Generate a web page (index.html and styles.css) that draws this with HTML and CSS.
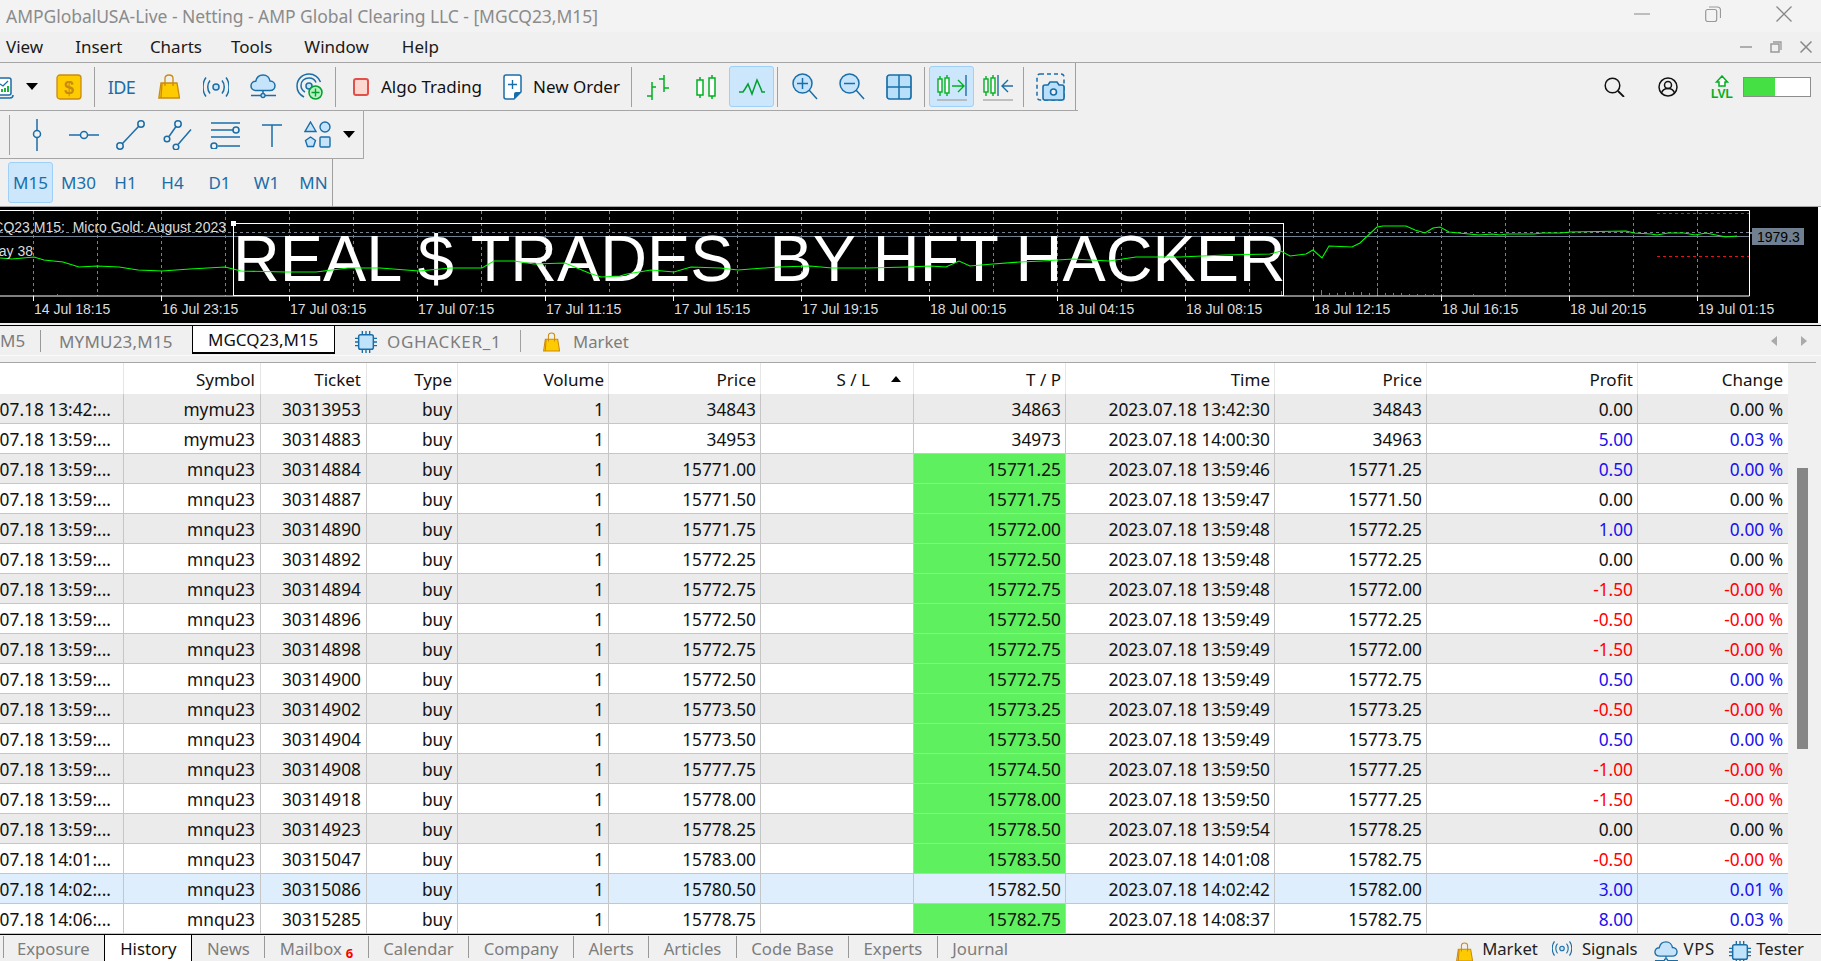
FILE: index.html
```html
<!DOCTYPE html>
<html lang="en">
<head>
<meta charset="utf-8">
<title>MetaTrader</title>
<link rel="stylesheet" href="styles.css">
</head>
<body>
<svg class="defs" width="0" height="0">
  <symbol id="bag" viewBox="0 0 22 25"><path d="M3 9h16l2.500 15H.8z" fill="#fecb00" stroke="#c98a10" stroke-width="1.300"/><path d="M7 12V4.500C7 2 8.500 1 11 1s4 1 4 3.500V12M4 9 3 24" fill="none" stroke="#c98a10" stroke-width="1.300"/></symbol>
  <symbol id="signal" viewBox="0 0 26 20"><circle cx="13" cy="10" r="3" fill="#c5e4fb" stroke="#1a6ea8" stroke-width="1.500"/><path d="M7 3.500c-3 3.500-3 9.500 0 13M19 3.500c3 3.500 3 9.500 0 13M3 .5c-4 5-4 14 0 19M23 .5c4 5 4 14 0 19" fill="none" stroke="#1a6ea8" stroke-width="1.500"/></symbol>
  <symbol id="cloud" viewBox="0 0 26 25"><path d="M6.500 16.500C2.500 16.500 1 14 1 12c0-3 2.300-4.700 4.700-4.700C6.500 3.500 9.500 1 13 1c4 0 6.500 3 7 6 3 0 5 2.200 5 4.800 0 2.600-2 4.700-5 4.700z" fill="#c5e4fb" stroke="#1a6ea8" stroke-width="1.500"/><path d="M1 21.500h25M13 16.500v5" stroke="#1a6ea8" stroke-width="1.500"/><circle cx="13" cy="21.500" r="2" fill="#c5e4fb" stroke="#1a6ea8" stroke-width="1.300"/></symbol>
  <symbol id="chip" viewBox="0 0 24 24"><rect x="4" y="4" width="16" height="16" rx="2" fill="#bfe3fb" stroke="#1a6ea8" stroke-width="1.600"/><path d="M8 0v4M12 0v4M16 0v4M8 20v4M12 20v4M16 20v4M0 8h4M0 12h4M0 16h4M20 8h4M20 12h4M20 16h4" stroke="#1a6ea8" stroke-width="1.500"/></symbol>
</svg>

<header class="titlebar">
  <span class="title-text">AMPGlobalUSA-Live - Netting - AMP Global Clearing LLC - [MGCQ23,M15]</span>
  <div class="win-controls">
    <svg width="16" height="16" viewBox="0 0 16 16"><path d="M0 8h16" stroke="#999" stroke-width="1.200"/></svg>
    <svg width="16" height="16" viewBox="0 0 16 16"><rect x=".7" y="3.500" width="11" height="12" rx="2" fill="none" stroke="#999" stroke-width="1.200"/><path d="M4 1h8.500a3 3 0 0 1 3 3v8" fill="none" stroke="#999" stroke-width="1.200"/></svg>
    <svg width="16" height="16" viewBox="0 0 16 16"><path d="M.5.500l15 15M15.500.500l-15 15" stroke="#888" stroke-width="1.300"/></svg>
  </div>
</header>

<nav class="menubar">
  <span class="menu-item m-view">View</span>
  <span class="menu-item m-insert">Insert</span>
  <span class="menu-item m-charts">Charts</span>
  <span class="menu-item m-tools">Tools</span>
  <span class="menu-item m-window">Window</span>
  <span class="menu-item m-help">Help</span>
  <div class="doc-controls">
    <svg width="12" height="12" viewBox="0 0 12 12"><path d="M0 6h12" stroke="#999" stroke-width="1.500"/></svg>
    <svg width="12" height="12" viewBox="0 0 12 12"><rect x="1" y="3" width="8" height="8" fill="none" stroke="#999" stroke-width="1.500"/><path d="M3 1h8v8" fill="none" stroke="#999" stroke-width="1.300"/></svg>
    <svg width="12" height="12" viewBox="0 0 12 12"><path d="M.5.500l11 11M11.500.500l-11 11" stroke="#888" stroke-width="1.500"/></svg>
  </div>
</nav>

<section class="toolrow">
  <div class="toolbar tb-main">
    <span class="btn btn-clip"><svg width="15" height="26" viewBox="11 0 15 26"><rect x="5" y="4" width="17" height="17" rx="2" fill="#fff" stroke="#1a6ea8" stroke-width="1.500"/><path d="M5 24h16a3 3 0 0 0 3-3" fill="none" stroke="#1a6ea8" stroke-width="1.500"/><path d="M11 10l3 2 5-5" fill="none" stroke="#1a6ea8" stroke-width="1.300"/><path d="M13 18v-3M16 18v-4M19 18v-6" stroke="#00b020" stroke-width="1.800"/></svg></span>
    <span class="btn btn-caret"><span class="caret"></span></span>
    <span class="btn btn-dollar"><svg width="26" height="26" viewBox="0 0 26 26"><rect x="1" y="1" width="24" height="24" rx="3" fill="#fecb00" stroke="#c98a10" stroke-width="1.300"/><text x="13" y="19.500" text-anchor="middle" class="dollar-glyph">$</text></svg></span>
    <span class="sep sep-a"></span>
    <span class="btn ide">IDE</span>
    <span class="btn"><svg width="22" height="25"><use href="#bag"/></svg></span>
    <span class="btn"><svg width="26" height="20"><use href="#signal"/></svg></span>
    <span class="btn"><svg width="26" height="25"><use href="#cloud"/></svg></span>
    <span class="btn"><svg width="27" height="27" viewBox="0 0 27 27"><path d="M8 24C3 21.500 1 17 1 13 1 6 6.500 1 13 1c5.500 0 10 3.500 11.500 8" fill="none" stroke="#1a6ea8" stroke-width="1.500"/><path d="M9 19c-2.500-1.500-4-3.500-4-6.500C5 8 8.500 5 13 5c3.500 0 6 2 7 4.500" fill="none" stroke="#1a6ea8" stroke-width="1.500"/><circle cx="13" cy="13" r="3" fill="#c5e4fb" stroke="#1a6ea8" stroke-width="1.500"/><circle cx="19.500" cy="19.500" r="6.500" fill="#b8f0c0" stroke="#00a030" stroke-width="1.500"/><path d="M19.500 15.500v8M15.500 19.500h8" stroke="#00a030" stroke-width="1.400"/></svg></span>
    <span class="sep sep-b"></span>
    <span class="textbtn algo"><span class="algo-box"></span>Algo Trading</span>
    <span class="textbtn order"><svg width="19" height="26" viewBox="0 0 19 26"><path d="M3 1h13a2 2 0 0 1 2 2v15l-7 7H3a2 2 0 0 1-2-2V3a2 2 0 0 1 2-2z" fill="#fff" stroke="#1a6ea8" stroke-width="1.500"/><path d="M18 18h-5a2 2 0 0 0-2 2v5z" fill="#1a6ea8"/><path d="M9.500 6v9M5 10.500h9" stroke="#1a6ea8" stroke-width="1.400"/></svg>New Order</span>
    <span class="sep sep-c"></span>
    <span class="btn"><svg width="26" height="26" viewBox="0 0 26 26" fill="none" stroke="#00b020" stroke-width="1.500"><path d="M6 8v18M1 22h5M6 13h4M18 1v17M13 5h5M18 14h5"/></svg></span>
    <span class="btn"><svg width="20" height="26" viewBox="0 0 20 26" fill="#fff" stroke="#00b020" stroke-width="1.500"><path d="M4 3v21M16 1v24"/><rect x="1" y="6" width="6" height="15"/><rect x="13" y="4" width="6" height="18"/></svg></span>
    <span class="btn active narrow"><svg width="26" height="18" viewBox="0 0 26 18"><path d="M0 14h4l2-3 3-5 4 10 5-14 4 9 1 3h3" fill="none" stroke="#00a030" stroke-width="1.500"/></svg></span>
    <span class="sep sep-d"></span>
    <span class="btn"><svg width="26" height="27" viewBox="0 0 26 27"><circle cx="10.500" cy="10.500" r="9.500" fill="#c5e4fb" stroke="#1a6ea8" stroke-width="1.500"/><path d="M17 17l8 9" stroke="#1a6ea8" stroke-width="1.500"/><path d="M10.500 5v11M5 10.500h11" stroke="#1a6ea8" stroke-width="1.500"/></svg></span>
    <span class="btn"><svg width="26" height="27" viewBox="0 0 26 27"><circle cx="10.500" cy="10.500" r="9.500" fill="#c5e4fb" stroke="#1a6ea8" stroke-width="1.500"/><path d="M17 17l8 9" stroke="#1a6ea8" stroke-width="1.500"/><path d="M5 10.500h11" stroke="#1a6ea8" stroke-width="1.500"/></svg></span>
    <span class="btn"><svg width="26" height="26" viewBox="0 0 26 26"><rect x="1" y="1" width="24" height="24" rx="2.500" fill="#b9e0fa" stroke="#1a6ea8" stroke-width="1.700"/><path d="M13 1v24M1 13h24" stroke="#1a6ea8" stroke-width="1.500"/></svg></span>
    <span class="sep sep-e"></span>
    <span class="btn active narrow wide-gap"><svg width="30" height="28" viewBox="0 0 30 28" fill="none" stroke="#00b020" stroke-width="1.400"><path d="M3 3v20M10 2v21"/><rect x="1" y="6" width="4" height="13" fill="#fff"/><rect x="8" y="5" width="4" height="15" fill="#fff"/><path d="M15 13h11M21 7l6 6-6 6"/><path d="M29 2v21" stroke="#1a6ea8"/><path d="M0 27h30" stroke="#aaa"/></svg></span>
    <span class="btn"><svg width="30" height="28" viewBox="0 0 30 28" fill="none" stroke="#00b020" stroke-width="1.400"><path d="M3 3v20M10 2v21"/><rect x="1" y="6" width="4" height="13" fill="#fff"/><rect x="8" y="5" width="4" height="15" fill="#fff"/><path d="M15 2v21" stroke="#1a6ea8"/><path d="M30 13H19M25 7l-6 6 6 6" stroke="#1a6ea8"/><path d="M0 27h30" stroke="#aaa"/></svg></span>
    <span class="sep sep-f"></span>
    <span class="btn"><svg width="30" height="28" viewBox="0 0 30 28"><rect x="1" y="1" width="27" height="26" rx="3" fill="none" stroke="#1a6ea8" stroke-width="1.500" stroke-dasharray="4 3"/><path d="M9 12h3l2-3h7l2 3h3a2 2 0 0 1 2 2v11a2 2 0 0 1-2 2H9a2 2 0 0 1-2-2V14a2 2 0 0 1 2-2z" fill="#b9e0fa" stroke="#1a6ea8" stroke-width="1.600"/><circle cx="17.500" cy="19" r="3" fill="#f0f0f0" stroke="#1a6ea8" stroke-width="1.600"/></svg></span>
    <span class="sep sep-end"></span>
  </div>
  <div class="tools-right">
    <svg class="r-search" width="21" height="20" viewBox="0 0 21 20"><circle cx="8.500" cy="8.500" r="7.300" fill="none" stroke="#111" stroke-width="1.500"/><path d="M14 14l6 6" stroke="#111" stroke-width="1.800"/></svg>
    <svg class="r-user" width="20" height="20" viewBox="0 0 20 20" fill="none" stroke="#111" stroke-width="1.500"><circle cx="10" cy="10" r="9"/><circle cx="10" cy="8" r="3.500"/><path d="M3.500 16c1-3 3.500-4.500 6.500-4.500s5.500 1.500 6.500 4.500"/></svg>
    <svg class="r-lvl" width="24" height="24" viewBox="0 0 24 24"><path d="M12 1l5.500 6H15v4H9V7H6.500z" fill="#fff" stroke="#00b020" stroke-width="1.500"/><text x="12" y="23" text-anchor="middle" class="lvl-text">LVL</text></svg>
    <span class="meter"><span class="meter-fill"></span></span>
  </div>
</section>

<section class="toolrow-2">
  <span class="sep sep-t"></span>
  <span class="btn"><svg width="12" height="32" viewBox="0 0 12 32" fill="none" stroke="#1a6ea8" stroke-width="1.500"><path d="M6 0v11M6 19v13"/><circle cx="6" cy="15" r="3.500"/></svg></span>
  <span class="btn"><svg width="30" height="10" viewBox="0 0 30 10" fill="none" stroke="#1a6ea8" stroke-width="1.500"><path d="M0 5h11M19 5h11"/><circle cx="15" cy="5" r="3.500"/></svg></span>
  <span class="btn"><svg width="29" height="30" viewBox="0 0 29 30" fill="none" stroke="#1a6ea8" stroke-width="1.500"><circle cx="4" cy="26" r="3.200"/><circle cx="25" cy="4" r="3.200"/><path d="M6.500 23.500l16-17"/></svg></span>
  <span class="btn"><svg width="29" height="30" viewBox="0 0 29 30" fill="none" stroke="#1a6ea8" stroke-width="1.500"><circle cx="4" cy="19" r="2.800"/><circle cx="15" cy="4" r="3.200"/><path d="M6 16.500l7-10"/><circle cx="13" cy="27" r="2.800"/><path d="M15 24.500l13-15"/></svg></span>
  <span class="btn"><svg width="30" height="28" viewBox="0 0 30 28" fill="none" stroke="#1a6ea8" stroke-width="1.600"><path d="M1 2h29M1 9h22M1 16h29M8 25h22"/><circle cx="26" cy="9" r="3"/><circle cx="4" cy="25" r="3"/></svg></span>
  <span class="btn"><svg width="20" height="24" viewBox="0 0 20 24" fill="none" stroke="#1a6ea8" stroke-width="1.500"><path d="M0 2h20M10 2v22"/></svg></span>
  <span class="btn shapes"><svg width="28" height="27" viewBox="0 0 28 27" fill="#c5e4fb" stroke="#1a6ea8" stroke-width="1.400"><path d="M6.500 1l5.500 9.500H1z"/><circle cx="21" cy="6" r="5"/><path d="M6.500 16l5 3.500-2 6h-6l-2-6z"/><rect x="16" y="16" width="10" height="10" rx="1"/></svg></span>
  <span class="caret caret-2"></span>
</section>

<section class="timeframes">
  <span class="tf tf-on">M15</span>
  <span class="tf">M30</span>
  <span class="tf">H1</span>
  <span class="tf">H4</span>
  <span class="tf">D1</span>
  <span class="tf">W1</span>
  <span class="tf">MN</span>
  <span class="sep sep-tf"></span>
</section>

<figure class="chart">
  <svg width="1818" height="116" viewBox="0 207 1818 116">
    <rect x="0" y="207" width="1818" height="116" fill="#000"/>
    <path class="grid" d="M33.500 211V296M97.500 211V296M161.500 211V296M225.500 211V296M289.500 211V296M353.500 211V296M417.500 211V296M481.500 211V296M545.500 211V296M609.500 211V296M673.500 211V296M737.500 211V296M801.500 211V296M865.500 211V296M929.500 211V296M993.500 211V296M1057.500 211V296M1121.500 211V296M1185.500 211V296M1249.500 211V296M1313.500 211V296M1377.500 211V296M1441.500 211V296M1505.500 211V296M1569.500 211V296M1633.500 211V296M1697.500 211V296"/>
    <path class="grid" d="M0 232.500H1749"/>
    <path class="price-line" d="M0 236.500H1749"/>
    <path class="vols" d="M1281.500 295V291M1321.500 295V290M1329.500 295V293M1337.500 295V293M1345.500 295V292M1353.500 295V292M1361.500 295V292M1369.500 295V293M1377.500 295V288M1385.500 295V293M1393.500 295V293M1401.500 295V293M1409.500 295V294M1417.500 295V294M1425.500 295V294M1433.500 295V294M1441.500 295V294M1473.500 295V294M57.500 295V294"/>
    <path class="stop" d="M1657 213.500H1749M1657 256.500H1749"/>
    <text class="big" x="233" y="281">REAL $ TRADES  BY HFT HACKER</text>
    <rect class="overlay" x="233.500" y="223.500" width="1050" height="72"/>
    <rect x="231" y="221" width="5" height="5" fill="#fff"/>
    <path class="plot" d="M0 210.500H1749.500V296H0"/>
    <path class="ticks" d="M33.500 296v5M161.500 296v5M289.500 296v5M417.500 296v5M545.500 296v5M673.500 296v5M801.500 296v5M929.500 296v5M1057.500 296v5M1185.500 296v5M1313.500 296v5M1441.500 296v5M1569.500 296v5M1697.500 296v5M1749 233h4"/>
    <polyline class="pline" points="0,258 12,259 34,257 44,260 63,262 79,267 97,266 119,267 138,270 162,271 190,269 225,267 241,271 285,272 316,272 348,268 380,268 419,271 451,268 482,268 494,261 514,261 534,264 565,263 589,273 601,277 620,276 627,274 651,270 674,272 691,267 720,268 738,270 778,267 810,266 832,268 868,268 908,267 930,266 946,267 959,261 970,266 993,264 1020,262 1042,261 1073,259 1109,261 1136,257 1180,257 1225,255 1270,254 1281,251 1290,256 1306,254 1313,250 1322,258 1329,246 1352,247 1360,243 1377,227 1383,226 1406,226 1415,230 1425,233 1433,228 1440,227 1449,232 1469,234 1479,235 1492,234 1500,235 1507,234 1523,234 1534,234 1542,233 1561,233 1570,232 1626,231 1634,233 1651,234 1657,235 1668,233 1684,233 1695,235 1706,233 1726,237 1737,236"/>
    <text class="chart-label" x="226" y="232" text-anchor="end">MGCQ23,M15:  Micro Gold: August 2023</text>
    <text class="chart-label" x="33" y="256" text-anchor="end">Day 38</text>
    <text class="chart-label" x="34" y="314">14 Jul 18:15</text>
    <text class="chart-label" x="162" y="314">16 Jul 23:15</text>
    <text class="chart-label" x="290" y="314">17 Jul 03:15</text>
    <text class="chart-label" x="418" y="314">17 Jul 07:15</text>
    <text class="chart-label" x="546" y="314">17 Jul 11:15</text>
    <text class="chart-label" x="674" y="314">17 Jul 15:15</text>
    <text class="chart-label" x="802" y="314">17 Jul 19:15</text>
    <text class="chart-label" x="930" y="314">18 Jul 00:15</text>
    <text class="chart-label" x="1058" y="314">18 Jul 04:15</text>
    <text class="chart-label" x="1186" y="314">18 Jul 08:15</text>
    <text class="chart-label" x="1314" y="314">18 Jul 12:15</text>
    <text class="chart-label" x="1442" y="314">18 Jul 16:15</text>
    <text class="chart-label" x="1570" y="314">18 Jul 20:15</text>
    <text class="chart-label" x="1698" y="314">19 Jul 01:15</text>
    <rect x="1752" y="228" width="52" height="17" fill="#708090"/>
    <text class="price-tag" x="1757" y="242">1979.3</text>
  </svg>
</figure>

<nav class="chart-tabs">
  <span class="ctab ctab-first">M5</span>
  <span class="ctab ctab-mymu">MYMU23,M15</span>
  <span class="ctab ctab-on">MGCQ23,M15</span>
  <span class="ctab ctab-chip"><svg width="22" height="22"><use href="#chip"/></svg>OGHACKER_1</span>
  <span class="sep sep-ct"></span>
  <span class="ctab ctab-market"><svg width="17" height="20"><use href="#bag"/></svg>Market</span>
  <span class="tab-arrows"><span class="arr arr-l"></span><span class="arr arr-r"></span></span>
</nav>
<div class="tabs-rule"></div>

<section class="grid-wrap">
  <table class="trades">
    <colgroup><col class="c1"><col class="c2"><col class="c3"><col class="c4"><col class="c5"><col class="c6"><col class="c7"><col class="c8"><col class="c9"><col class="c10"><col class="c11"><col class="c12"></colgroup>
    <thead><tr><th></th><th>Symbol</th><th>Ticket</th><th>Type</th><th>Volume</th><th>Price</th><th class="th-sl">S / L<span class="sort"></span></th><th>T / P</th><th>Time</th><th>Price</th><th>Profit</th><th>Change</th></tr></thead>
    <tbody>
      <tr><td class="t0"><span>2023.07.18 13:42:...</span></td><td>mymu23</td><td>30313953</td><td>buy</td><td>1</td><td>34843</td><td></td><td>34863</td><td>2023.07.18 13:42:30</td><td>34843</td><td>0.00</td><td>0.00 %</td></tr>
      <tr><td class="t0"><span>2023.07.18 13:59:...</span></td><td>mymu23</td><td>30314883</td><td>buy</td><td>1</td><td>34953</td><td></td><td>34973</td><td>2023.07.18 14:00:30</td><td>34963</td><td class="up">5.00</td><td class="up">0.03 %</td></tr>
      <tr><td class="t0"><span>2023.07.18 13:59:...</span></td><td>mnqu23</td><td>30314884</td><td>buy</td><td>1</td><td>15771.00</td><td></td><td class="tp">15771.25</td><td>2023.07.18 13:59:46</td><td>15771.25</td><td class="up">0.50</td><td class="up">0.00 %</td></tr>
      <tr><td class="t0"><span>2023.07.18 13:59:...</span></td><td>mnqu23</td><td>30314887</td><td>buy</td><td>1</td><td>15771.50</td><td></td><td class="tp">15771.75</td><td>2023.07.18 13:59:47</td><td>15771.50</td><td>0.00</td><td>0.00 %</td></tr>
      <tr><td class="t0"><span>2023.07.18 13:59:...</span></td><td>mnqu23</td><td>30314890</td><td>buy</td><td>1</td><td>15771.75</td><td></td><td class="tp">15772.00</td><td>2023.07.18 13:59:48</td><td>15772.25</td><td class="up">1.00</td><td class="up">0.00 %</td></tr>
      <tr><td class="t0"><span>2023.07.18 13:59:...</span></td><td>mnqu23</td><td>30314892</td><td>buy</td><td>1</td><td>15772.25</td><td></td><td class="tp">15772.50</td><td>2023.07.18 13:59:48</td><td>15772.25</td><td>0.00</td><td>0.00 %</td></tr>
      <tr><td class="t0"><span>2023.07.18 13:59:...</span></td><td>mnqu23</td><td>30314894</td><td>buy</td><td>1</td><td>15772.75</td><td></td><td class="tp">15772.75</td><td>2023.07.18 13:59:48</td><td>15772.00</td><td class="dn">-1.50</td><td class="dn">-0.00 %</td></tr>
      <tr><td class="t0"><span>2023.07.18 13:59:...</span></td><td>mnqu23</td><td>30314896</td><td>buy</td><td>1</td><td>15772.50</td><td></td><td class="tp">15772.50</td><td>2023.07.18 13:59:49</td><td>15772.25</td><td class="dn">-0.50</td><td class="dn">-0.00 %</td></tr>
      <tr><td class="t0"><span>2023.07.18 13:59:...</span></td><td>mnqu23</td><td>30314898</td><td>buy</td><td>1</td><td>15772.75</td><td></td><td class="tp">15772.75</td><td>2023.07.18 13:59:49</td><td>15772.00</td><td class="dn">-1.50</td><td class="dn">-0.00 %</td></tr>
      <tr><td class="t0"><span>2023.07.18 13:59:...</span></td><td>mnqu23</td><td>30314900</td><td>buy</td><td>1</td><td>15772.50</td><td></td><td class="tp">15772.75</td><td>2023.07.18 13:59:49</td><td>15772.75</td><td class="up">0.50</td><td class="up">0.00 %</td></tr>
      <tr><td class="t0"><span>2023.07.18 13:59:...</span></td><td>mnqu23</td><td>30314902</td><td>buy</td><td>1</td><td>15773.50</td><td></td><td class="tp">15773.25</td><td>2023.07.18 13:59:49</td><td>15773.25</td><td class="dn">-0.50</td><td class="dn">-0.00 %</td></tr>
      <tr><td class="t0"><span>2023.07.18 13:59:...</span></td><td>mnqu23</td><td>30314904</td><td>buy</td><td>1</td><td>15773.50</td><td></td><td class="tp">15773.50</td><td>2023.07.18 13:59:49</td><td>15773.75</td><td class="up">0.50</td><td class="up">0.00 %</td></tr>
      <tr><td class="t0"><span>2023.07.18 13:59:...</span></td><td>mnqu23</td><td>30314908</td><td>buy</td><td>1</td><td>15777.75</td><td></td><td class="tp">15774.50</td><td>2023.07.18 13:59:50</td><td>15777.25</td><td class="dn">-1.00</td><td class="dn">-0.00 %</td></tr>
      <tr><td class="t0"><span>2023.07.18 13:59:...</span></td><td>mnqu23</td><td>30314918</td><td>buy</td><td>1</td><td>15778.00</td><td></td><td class="tp">15778.00</td><td>2023.07.18 13:59:50</td><td>15777.25</td><td class="dn">-1.50</td><td class="dn">-0.00 %</td></tr>
      <tr><td class="t0"><span>2023.07.18 13:59:...</span></td><td>mnqu23</td><td>30314923</td><td>buy</td><td>1</td><td>15778.25</td><td></td><td class="tp">15778.50</td><td>2023.07.18 13:59:54</td><td>15778.25</td><td>0.00</td><td>0.00 %</td></tr>
      <tr><td class="t0"><span>2023.07.18 14:01:...</span></td><td>mnqu23</td><td>30315047</td><td>buy</td><td>1</td><td>15783.00</td><td></td><td class="tp">15783.50</td><td>2023.07.18 14:01:08</td><td>15782.75</td><td class="dn">-0.50</td><td class="dn">-0.00 %</td></tr>
      <tr class="selected"><td class="t0"><span>2023.07.18 14:02:...</span></td><td>mnqu23</td><td>30315086</td><td>buy</td><td>1</td><td>15780.50</td><td></td><td>15782.50</td><td>2023.07.18 14:02:42</td><td>15782.00</td><td class="up">3.00</td><td class="up">0.01 %</td></tr>
      <tr class="plain"><td class="t0"><span>2023.07.18 14:06:...</span></td><td>mnqu23</td><td>30315285</td><td>buy</td><td>1</td><td>15778.75</td><td></td><td class="tp">15782.75</td><td>2023.07.18 14:08:37</td><td>15782.75</td><td class="up">8.00</td><td class="up">0.03 %</td></tr>
    </tbody>
  </table>
  <div class="scrollbar"><div class="thumb"></div></div>
</section>

<footer class="bottom-tabs">
  <span class="btab-sep"></span>
  <span class="btab btab-first">Exposure</span>
  <span class="btab btab-on">History</span>
  <span class="btab">News</span>
  <span class="btab-sep"></span>
  <span class="btab btab-mail">Mailbox<b class="badge">6</b></span>
  <span class="btab-sep"></span>
  <span class="btab">Calendar</span>
  <span class="btab-sep"></span>
  <span class="btab">Company</span>
  <span class="btab-sep"></span>
  <span class="btab">Alerts</span>
  <span class="btab-sep"></span>
  <span class="btab">Articles</span>
  <span class="btab-sep"></span>
  <span class="btab">Code Base</span>
  <span class="btab-sep"></span>
  <span class="btab">Experts</span>
  <span class="btab-sep"></span>
  <span class="btab">Journal</span>
  <div class="status-links">
    <span class="slink slink-market"><svg width="17" height="22"><use href="#bag"/></svg>Market</span>
    <span class="slink slink-signals"><svg width="20" height="15"><use href="#signal"/></svg>Signals</span>
    <span class="slink slink-vps"><svg width="24" height="23"><use href="#cloud"/></svg>VPS</span>
    <span class="slink slink-tester"><svg width="22" height="22"><use href="#chip"/></svg>Tester</span>
  </div>
</footer>
</body>
</html>
```

FILE: styles.css
```css
* { box-sizing: border-box; }
html, body { margin: 0; padding: 0; }
body {
  width: 1821px;
  height: 961px;
  overflow: hidden;
  background: #f0f0f0;
  color: #111;
  font-family: "Noto Sans", "Open Sans", sans-serif;
  font-size: 17px;
}
.defs { position: absolute; }
svg { display: block; flex: none; }

.titlebar {
  height: 32px;
  background: #f3f3f3;
  display: flex;
  align-items: center;
  padding-left: 6px;
}
.title-text { color: #8b8b8b; font-size: 17.5px; letter-spacing: -.05px; }
.win-controls { margin-left: auto; display: flex; gap: 55px; padding-right: 29px; margin-top: -4px; }

.menubar {
  height: 31px;
  border-bottom: 1px solid #a6a6a6;
  display: flex;
  align-items: center;
  position: relative;
}
.menu-item { color: #1a1a1a; line-height: 30px; }
.m-view { margin-left: 6px; }
.m-insert { margin-left: 32px; }
.m-charts { margin-left: 27.500px; }
.m-tools { margin-left: 29px; }
.m-window { margin-left: 32px; }
.m-help { margin-left: 33px; }
.doc-controls { margin-left: auto; display: flex; gap: 18px; padding-right: 9px; }

.toolrow { height: 48px; display: flex; }
.toolbar {
  width: 1078px;
  height: 48px;
  display: flex;
  align-items: center;
  border-bottom: 1px solid #a6a6a6;
}
.btn {
  width: 47px;
  height: 41px;
  display: flex;
  align-items: center;
  justify-content: center;
  flex: none;
  border: 1px solid transparent;
  border-radius: 3px;
}
.btn-clip { width: 15px; justify-content: flex-start; border: 0; }
.btn-caret { width: 33px; }
.btn-dollar { width: 41px; }
.narrow { width: 45px; }
.active { background: #cce6fb; border-color: #9fd0f8; }
.caret {
  width: 0;
  height: 0;
  border-left: 6px solid transparent;
  border-right: 6px solid transparent;
  border-top: 7px solid #000;
  display: block;
}
.sep { width: 1px; height: 40px; background: #a0a0a0; flex: none; display: block; }
.sep-a { margin: 0 3px 0 5px; }
.sep-b { margin: 0 9px 0 2px; }
.sep-c { margin: 0 3px 0 0; }
.sep-d { margin: 0 3px 0 3px; }
.sep-e { margin: 0 4px 0 2px; }
.sep-f { margin: 0 3px 0 2px; }
.sep-end { height: 47px; margin-left: 1px; }
.ide { color: #1a6ea8; font-size: 18px; letter-spacing: -.6px; }
.textbtn {
  display: flex;
  align-items: center;
  height: 41px;
  color: #111;
  flex: none;
}
.algo { width: 158px; padding-left: 8px; }
.algo-box {
  width: 16px;
  height: 18px;
  background: #fdd8d0;
  border: 2px solid #e2504a;
  border-radius: 3px;
  margin-right: 12px;
}
.order { width: 128px; }
.order svg { margin-right: 11px; }

.tools-right { flex: 1; display: flex; align-items: center; padding-left: 526px; }
.r-user { margin-left: 33px; }
.r-lvl { margin-left: 32px; }
.meter {
  width: 68px;
  height: 20px;
  margin-left: 9px;
  background: #fff;
  border: 1px solid #8d8d8d;
  display: block;
}
.meter-fill { display: block; width: 31px; height: 100%; background: #44e044; }
.dollar-glyph { font: bold 18px "Liberation Sans", sans-serif; fill: #c98a10; }
.lvl-text { font: bold 12px "Liberation Sans", sans-serif; fill: #00b020; }

.toolrow-2 {
  width: 364px;
  height: 48px;
  display: flex;
  align-items: center;
  border-bottom: 1px solid #a6a6a6;
  border-right: 1px solid #a6a6a6;
  padding-left: 9px;
}
.sep-t { margin-right: 3px; }
.toolrow-2 .btn { width: 47px; }
.toolrow-2 .shapes { width: 46px; }
.caret-2 { margin-left: 2px; }

.timeframes {
  height: 48px;
  display: flex;
  align-items: center;
  padding-left: 8px;
  border-bottom: 1px solid #a6a6a6;
}
.tf {
  width: 47px;
  height: 41px;
  line-height: 40px;
  text-align: center;
  color: #1a6ea8;
  flex: none;
  border-radius: 3px;
  border: 1px solid transparent;
  margin-top: -1px;
}
.tf-on { width: 45px; margin-right: 2px; background: #cce6fb; border-color: #9fd0f8; }
.sep-tf { height: 47px; margin-left: -5px; }

.chart { margin: 0; height: 116px; background: #fff; }
.grid { stroke: #79838f; stroke-dasharray: 3 3; fill: none; stroke-width: 1; }
.price-line { stroke: #708090; stroke-width: 1; fill: none; }
.stop { stroke: #e81010; stroke-dasharray: 3 3; fill: none; }
.plot { fill: none; stroke: #fff; stroke-width: 1; }
.ticks { stroke: #fff; fill: none; }
.vols { stroke: #00d000; fill: none; }
.overlay { fill: none; stroke: #fff; stroke-width: 1; }
.big { font: 64.800px "Liberation Sans", sans-serif; fill: #fff; white-space: pre; }
.pline { fill: none; stroke: #00ff00; stroke-width: 1.100; }
.chart-label { font: 14px "Liberation Sans", sans-serif; fill: #dcdcdc; white-space: pre; }
.price-tag { font: 14px "Liberation Sans", sans-serif; fill: #000; }

.chart-tabs {
  margin-top: 2px;
  height: 30px;
  border-top: 1px solid #000;
  display: flex;
  align-items: center;
  color: #7d7d7d;
}
.ctab { height: 28px; line-height: 27px; flex: none; display: flex; align-items: center; white-space: nowrap; padding-top: 2px; }
.ctab-first { width: 41px; border-right: 1px solid #999; height: 22px; padding-top: 0; }
.ctab-mymu { width: 151px; padding-left: 18px; letter-spacing: .2px; }
.ctab-on {
  width: 143px;
  padding-left: 15px;
  padding-top: 0;
  background: #fff;
  color: #111;
  border: 1px solid #000;
  border-top: 0;
  border-width: 0 1px 2px 1px;
  align-self: flex-start;
}
.ctab-chip { padding-left: 20px; gap: 10px; width: 185px; letter-spacing: .7px; }
.sep-ct { height: 22px; }
.ctab-market { padding-left: 22px; gap: 13px; font-size: 16.700px; }
.tab-arrows { margin-left: auto; display: flex; gap: 24px; padding-right: 14px; }
.arr { width: 0; height: 0; border-top: 5px solid transparent; border-bottom: 5px solid transparent; display: block; }
.arr-l { border-right: 6px solid #aaa; }
.arr-r { border-left: 6px solid #aaa; }
.tabs-rule { height: 7px; border-top: 1px solid #fafafa; }

.grid-wrap {
  width: 1816px;
  height: 572px;
  border-top: 1px solid #a6a6a6;
  display: flex;
  overflow: hidden;
}
.trades {
  width: 1788px;
  table-layout: fixed;
  border-collapse: separate;
  border-spacing: 0;
  background: #fff;
  flex: none;
}
.c1 { width: 124px; } .c2 { width: 137px; } .c3 { width: 106px; } .c4 { width: 91px; }
.c5 { width: 151px; } .c6 { width: 152px; } .c7 { width: 153px; } .c8 { width: 152px; }
.c9 { width: 209px; } .c10 { width: 152px; } .c11 { width: 211px; } .c12 { width: 150px; }
.trades th, .trades td {
  text-align: right;
  padding: 0 4px 0 0;
  font-weight: 400;
  white-space: nowrap;
  overflow: hidden;
}
.trades th { height: 31px; border-right: 1px solid #e6e6e6; color: #111; font-size: 17px; padding-top: 1px; }
.trades td {
  height: 30px;
  padding-top: 2px;
  border-right: 1px solid #c6c6c6;
  border-bottom: 1px solid #c6c6c6;
  color: #111;
  font-size: 17.300px;
}
.trades th:nth-child(-n+4), .trades td:nth-child(-n+4) { padding-right: 5px; }
.trades th:last-child, .trades td:last-child { border-right: 0; padding-right: 5px; }
.trades tbody tr:nth-child(odd) td { background: #ebebeb; }
.trades tbody tr.selected td { background: #deeefc; }
.trades tbody tr.plain td { background: #fff; }
.trades tbody td.tp, .trades tbody tr:nth-child(odd) td.tp { background: #5ff05f; }
.trades tbody tr.plain td.tp { background: #5ff05f; }
.trades td.up { color: #1a10f0; }
.trades td.dn { color: #f00; }
.t0 span { display: block; margin-left: -60px; padding-right: 7px; text-align: right; }
.th-sl { padding-right: 12px !important; }
.sort {
  display: inline-block;
  width: 0;
  height: 0;
  margin-left: 21px;
  vertical-align: 4px;
  border-left: 5px solid transparent;
  border-right: 5px solid transparent;
  border-bottom: 6px solid #000;
}
.scrollbar { width: 28px; flex: none; background: #f0f0f0; padding: 105px 8px 0 9px; }
.thumb { height: 281px; background: #868686; }

.bottom-tabs {
  height: 27px;
  border-top: 1px solid #000;
  display: flex;
  color: #7d7d7d;
  overflow: hidden;
  line-height: 28px;
  padding-left: 3px;
  font-size: 16.700px;
}
.btab { padding: 0 14.500px; flex: none; white-space: nowrap; }
.btab-first { padding-left: 13px; }
.btab-on { background: #fff; color: #111; border: 1px solid #000; border-width: 0 1px; padding: 0 15px; }
.btab-sep { width: 1px; height: 22px; margin-top: 1px; background: #999; flex: none; }
.badge { color: #f00; font-size: 13px; font-weight: 700; margin-left: 4px; vertical-align: -3px; line-height: 1; }
.status-links { margin-left: auto; display: flex; color: #222; padding-right: 17px; }
.slink { display: flex; align-items: flex-start; gap: 5.500px; }
.slink-market { gap: 9px; }
.slink-signals { gap: 10px; margin-left: 14px; }
.slink-vps { margin-left: 16.500px; letter-spacing: .6px; }
.slink-tester { margin-left: 14px; }
.slink svg { margin-top: 6px; }
```
